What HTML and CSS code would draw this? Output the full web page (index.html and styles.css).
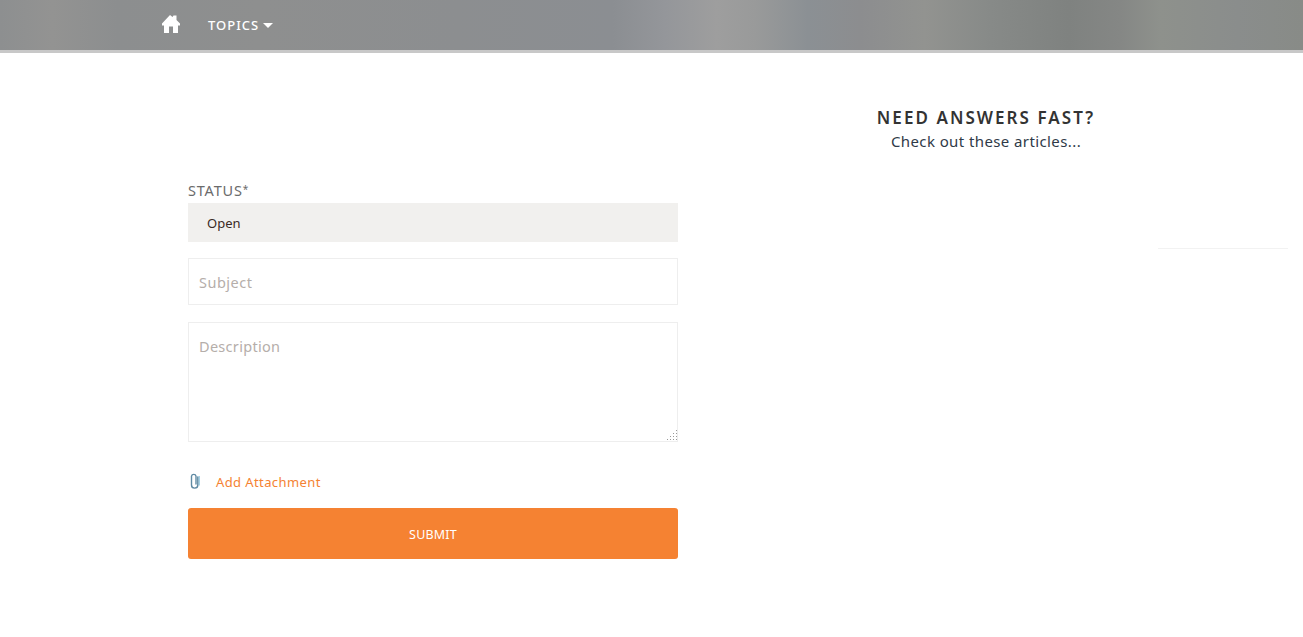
FILE: index.html
```html
<!DOCTYPE html>
<html lang="en">
<head>
    <meta charset="UTF-8">
    <meta name="viewport" content="width=device-width, initial-scale=1.0">
    <title>New Ticket</title>
    <link rel="stylesheet" href="styles.css">
</head>
<body>
    <header class="topbar">
        <a class="home-link" href="#" aria-label="Home">
            <svg class="home-icon" viewBox="0 0 18 18" width="18" height="18">
                <path fill="#fff" d="M8 0 L10.5 2 L11.5 0.5 H14.5 V5 L18 8.5 V10.5 H16 V18 H11 V11.5 H7 V18 H2 V10.5 H0 V8.5 Z"/>
            </svg>
        </a>
        <a class="topics-link" href="#">TOPICS<span class="caret"></span></a>
    </header>

    <main class="page">
        <form class="ticket-form">
            <label class="field-label">STATUS<span class="required">*</span></label>
            <div class="status-value">Open</div>
            <input class="text-input" type="text" placeholder="Subject">
            <div class="area-wrap">
                <textarea class="text-area" placeholder="Description"></textarea>
                <svg class="grip" viewBox="0 0 10 10" width="10" height="10">
                    <path fill="#999" d="M9 0h1v1H9zM6 3h1v1H6zM9 3h1v1H9zM3 6h1v1H3zM6 6h1v1H6zM9 6h1v1H9zM0 9h1v1H0zM3 9h1v1H3zM6 9h1v1H6zM9 9h1v1H9z"/>
                </svg>
            </div>
            <a class="attach-link" href="#">
                <svg class="clip-icon" viewBox="0 0 10 16" width="10" height="16">
                    <path fill="none" stroke="#8ec6de" stroke-width="1.2" d="M9.2 3 V12.5"/>
                    <path fill="none" stroke="#5f8aa3" stroke-width="1.4" stroke-linecap="round" d="M7.8 4 V12 A3 3 0 0 1 1.5 12 V3.2 A2.3 2.3 0 0 1 6 3.2 V11"/>
                </svg>
                <span>Add Attachment</span>
            </a>
            <button class="submit-btn" type="button">SUBMIT</button>
        </form>

        <aside class="help">
            <h2>NEED ANSWERS FAST?</h2>
            <p>Check out these articles...</p>
        </aside>

        <div class="side-rule"></div>
    </main>
</body>
</html>
```

FILE: styles.css
```css
body {
    margin: 0;
    background: white;
    font-family: "Noto Sans", "Open Sans", sans-serif;
    color: #333;
}

.topbar {
    display: flex;
    align-items: center;
    height: 50px;
    padding-left: 162px;
    border-bottom: 3px solid #c8c8c8;
    background: linear-gradient(90deg, #8d8f90 0, #939392 4%, #8c8e8f 9%, #8e8f8f 20%, #8c8e90 35%, #8b8e92 47%, #94969a 51%, #9e9e9e 55%, #999a9a 58%, #8b9094 62%, #8c8d8f 66%, #929390 71%, #878a88 76%, #7f8280 82%, #858785 86%, #8e918c 89%, #8a8d8c 95%, #888b87 100%);
}

.home-link {
    display: flex;
    width: 46px;
}

.home-icon {
    margin-top: -2px;
}

.topics-link {
    display: flex;
    align-items: center;
    color: white;
    font-size: 13px;
    font-weight: 500;
    letter-spacing: 1px;
    text-decoration: none;
}

.caret {
    margin-left: 4px;
    border-top: 5px solid white;
    border-left: 5px solid transparent;
    border-right: 5px solid transparent;
}

.page {
    display: flex;
    align-items: flex-start;
    padding-left: 188px;
}

.ticket-form {
    display: flex;
    flex-direction: column;
    width: 490px;
    padding-top: 127px;
}

.field-label {
    height: 23px;
    font-size: 14.5px;
    line-height: 20px;
    letter-spacing: 0.8px;
    color: #6b6b6b;
}

.required {
    display: inline-block;
    font-size: 10px;
    line-height: 10px;
    vertical-align: 3px;
}

.status-value {
    height: 39px;
    padding-left: 19px;
    background: #f1f0ee;
    font-size: 13px;
    line-height: 41px;
    color: #3a2a25;
}

.text-input,
.text-area {
    box-sizing: border-box;
    width: 100%;
    margin: 0;
    padding: 0 10px;
    border: 1px solid #eeeeee;
    background: white;
    font-family: inherit;
    font-size: 14.5px;
    letter-spacing: 0.5px;
    outline: none;
}

.text-input::placeholder,
.text-area::placeholder {
    color: #b5aeaa;
    opacity: 1;
}

.text-input {
    height: 47px;
    margin-top: 16px;
}

.area-wrap {
    position: relative;
    margin-top: 17px;
}

.text-area {
    display: block;
    height: 120px;
    padding-top: 13px;
    letter-spacing: 0.3px;
    resize: none;
}

.grip {
    position: absolute;
    right: 1px;
    bottom: 2px;
}

.attach-link {
    display: flex;
    align-items: center;
    height: 20px;
    margin-top: 30px;
    padding-left: 2px;
    color: #f58232;
    font-size: 13px;
    letter-spacing: 0.4px;
    text-decoration: none;
}

.clip-icon {
    margin-right: 16px;
    margin-top: -2px;
}

.submit-btn {
    height: 51px;
    margin-top: 16px;
    padding-top: 2px;
    border: none;
    border-radius: 3px;
    background: #f58232;
    color: white;
    font-family: inherit;
    font-size: 12.5px;
    letter-spacing: 0.2px;
    cursor: pointer;
}

.help {
    width: 328px;
    margin-left: 144px;
    padding-top: 54px;
    text-align: center;
}

.help h2 {
    margin: 0;
    font-size: 17px;
    font-weight: 600;
    line-height: 22px;
    letter-spacing: 2.05px;
    color: #333;
}

.help p {
    margin: 0;
    font-size: 15px;
    line-height: 24px;
    letter-spacing: 0.4px;
    color: #2f3a48;
}

.side-rule {
    width: 130px;
    margin-left: 8px;
    margin-top: 195px;
    border-top: 1px solid #f2f2f2;
}
```
